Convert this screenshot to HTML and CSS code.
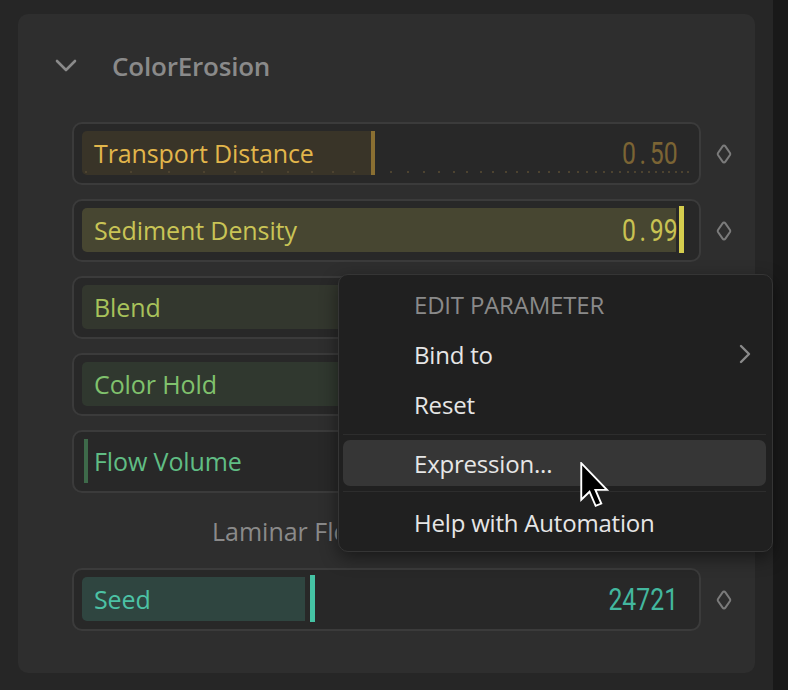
FILE: index.html
```html
<!DOCTYPE html>
<html>
<head>
<meta charset="utf-8">
<link rel="stylesheet" href="styles.css">
</head>
<body>
<div class="app">
  <div class="stage">
    <section class="panel">
      <header class="panel-head">
        <svg class="chev-down" width="22" height="14" viewBox="0 0 22 14"><path d="M2 2 L11 11 L20 2" fill="none" stroke="#8a8a8a" stroke-width="2.6" stroke-linecap="round" stroke-linejoin="round"/></svg>
        <h2 class="panel-title">ColorErosion</h2>
      </header>

      <div class="params">
        <div class="param">
          <div class="field">
            <div class="track">
              <div class="fill fill-transport" style="width:289px"></div>
              <div class="mark mark-transport" style="left:289px"></div>
              <svg class="ticks" width="609" height="44" viewBox="0 0 609 44">
                <g fill="#4d4330">
                  <rect x="3" y="40" width="2" height="2"/><rect x="48" y="40" width="2" height="2"/><rect x="86" y="40" width="2" height="2"/><rect x="121" y="40" width="2" height="2"/><rect x="152" y="40" width="2" height="2"/><rect x="179" y="40" width="2" height="2"/><rect x="205" y="40" width="2" height="2"/><rect x="229" y="40" width="2" height="2"/><rect x="250" y="40" width="2" height="2"/><rect x="271" y="40" width="2" height="2"/><rect x="308" y="40" width="2" height="2"/><rect x="325" y="40" width="2" height="2"/><rect x="341" y="40" width="2" height="2"/><rect x="356" y="40" width="2" height="2"/><rect x="371" y="40" width="2" height="2"/><rect x="384" y="40" width="2" height="2"/><rect x="398" y="40" width="2" height="2"/><rect x="410" y="40" width="2" height="2"/><rect x="423" y="40" width="2" height="2"/><rect x="434" y="40" width="2" height="2"/><rect x="445" y="40" width="2" height="2"/><rect x="456" y="40" width="2" height="2"/><rect x="466" y="40" width="2" height="2"/><rect x="476" y="40" width="2" height="2"/><rect x="486" y="40" width="2" height="2"/><rect x="495" y="40" width="2" height="2"/><rect x="504" y="40" width="2" height="2"/><rect x="513" y="40" width="2" height="2"/><rect x="521" y="40" width="2" height="2"/><rect x="529" y="40" width="2" height="2"/><rect x="537" y="40" width="2" height="2"/><rect x="545" y="40" width="2" height="2"/><rect x="552" y="40" width="2" height="2"/><rect x="559" y="40" width="2" height="2"/><rect x="566" y="40" width="2" height="2"/><rect x="573" y="40" width="2" height="2"/><rect x="580" y="40" width="2" height="2"/><rect x="586" y="40" width="2" height="2"/><rect x="593" y="40" width="2" height="2"/><rect x="599" y="40" width="2" height="2"/><rect x="605" y="40" width="2" height="2"/>
                </g>
              </svg>
              <div class="content">
                <span class="label c-transport">Transport Distance</span>
                <span class="value v-transport">0<span class="dot">.</span>50</span>
              </div>
            </div>
          </div>
          <svg class="key" width="16" height="20" viewBox="0 0 16 20"><path d="M8 1.5 Q8.8 1.5 9.4 2.4 L14 9 Q14.6 10 14 11 L9.4 17.6 Q8.8 18.5 8 18.5 Q7.2 18.5 6.6 17.6 L2 11 Q1.4 10 2 9 L6.6 2.4 Q7.2 1.5 8 1.5 Z" fill="none" stroke="#7b7b7b" stroke-width="2"/></svg>
        </div>

        <div class="param">
          <div class="field">
            <div class="track">
              <div class="fill fill-sediment" style="width:594px"></div>
              <div class="mark mark-sediment" style="left:597px"></div>
              <div class="content">
                <span class="label c-sediment">Sediment Density</span>
                <span class="value v-sediment">0<span class="dot">.</span>99</span>
              </div>
            </div>
          </div>
          <svg class="key" width="16" height="20" viewBox="0 0 16 20"><path d="M8 1.5 Q8.8 1.5 9.4 2.4 L14 9 Q14.6 10 14 11 L9.4 17.6 Q8.8 18.5 8 18.5 Q7.2 18.5 6.6 17.6 L2 11 Q1.4 10 2 9 L6.6 2.4 Q7.2 1.5 8 1.5 Z" fill="none" stroke="#7b7b7b" stroke-width="2"/></svg>
        </div>

        <div class="param">
          <div class="field">
            <div class="track">
              <div class="fill fill-blend" style="width:609px"></div>
              <div class="content">
                <span class="label c-blend">Blend</span>
              </div>
            </div>
          </div>
          <span class="key-space"></span>
        </div>

        <div class="param">
          <div class="field">
            <div class="track">
              <div class="fill fill-hold" style="width:609px"></div>
              <div class="content">
                <span class="label c-hold">Color Hold</span>
              </div>
            </div>
          </div>
          <span class="key-space"></span>
        </div>

        <div class="param">
          <div class="field">
            <div class="track">
              <div class="mark mark-flow" style="left:2px"></div>
              <div class="content">
                <span class="label c-flow">Flow Volume</span>
              </div>
            </div>
          </div>
          <span class="key-space"></span>
        </div>

        <div class="caption"><span class="caption-text">Laminar Flow</span></div>

        <div class="param">
          <div class="field">
            <div class="track">
              <div class="fill fill-seed" style="width:223px"></div>
              <div class="mark mark-seed" style="left:228px"></div>
              <div class="content">
                <span class="label c-seed">Seed</span>
                <span class="value v-seed">24721</span>
              </div>
            </div>
          </div>
          <svg class="key" width="16" height="20" viewBox="0 0 16 20"><path d="M8 1.5 Q8.8 1.5 9.4 2.4 L14 9 Q14.6 10 14 11 L9.4 17.6 Q8.8 18.5 8 18.5 Q7.2 18.5 6.6 17.6 L2 11 Q1.4 10 2 9 L6.6 2.4 Q7.2 1.5 8 1.5 Z" fill="none" stroke="#7b7b7b" stroke-width="2"/></svg>
        </div>
      </div>
    </section>
  </div>
  <div class="sidebar"></div>

  <div class="menu">
    <div class="menu-title">EDIT PARAMETER</div>
    <div class="menu-item">
      <span>Bind to</span>
      <svg class="chev-right" width="14" height="22" viewBox="0 0 14 22"><path d="M3 3 L11 11 L3 19" fill="none" stroke="#8a8a8a" stroke-width="2.4" stroke-linecap="round" stroke-linejoin="round"/></svg>
    </div>
    <div class="menu-item"><span>Reset</span></div>
    <div class="menu-sep"></div>
    <div class="menu-item menu-item-hot"><span>Expression...</span></div>
    <div class="menu-sep"></div>
    <div class="menu-item"><span>Help with Automation</span></div>
  </div>

  <svg class="cursor" width="32" height="46" viewBox="0 0 13.5 19.5"><path d="M0.5 0.5 L0.5 16 L4 12.6 L6.6 18.6 L9 17.6 L6.5 11.8 L11.4 11.8 Z" fill="#000" stroke="#fff" stroke-width="0.8" stroke-linejoin="miter"/></svg>
</div>
</body>
</html>
```

FILE: styles.css
```css
* { box-sizing: border-box; margin: 0; padding: 0; }

html, body {
  width: 788px;
  height: 690px;
  overflow: hidden;
  background: #262626;
  font-family: "Open Sans", "Noto Sans", sans-serif;
}

.app {
  position: relative;
  display: flex;
  width: 788px;
  height: 690px;
}

.stage {
  width: 773px;
  height: 690px;
  padding: 14px 0 0 18px;
  background: #262626;
}

.sidebar {
  width: 15px;
  height: 690px;
  background: #191919;
}

.panel {
  width: 737px;
  height: 659px;
  background: #2e2e2e;
  border-radius: 10px;
  padding-top: 26px;
}

.panel-head {
  display: flex;
  align-items: center;
  height: 52px;
  padding-left: 37px;
}

.chev-down { display: block; }

.panel-title {
  margin-left: 35px;
  font-size: 26px;
  font-weight: 600;
  color: #8a8a8a;
  letter-spacing: -0.2px;
}

.params {
  margin-top: 30px;
  padding-left: 54px;
  display: flex;
  flex-direction: column;
  gap: 14px;
}

.param {
  display: flex;
  align-items: center;
}

.field {
  width: 629px;
  height: 63px;
  border: 2px solid #3b3b3b;
  border-radius: 10px;
  background: #282828;
  padding: 7px 8px 8px 8px;
}

.track {
  position: relative;
  height: 44px;
  width: 609px;
}

.fill {
  position: absolute;
  left: 0; top: 0; bottom: 0;
  border-radius: 5px;
}

.fill-transport { background: #393428; border-radius: 5px 0 0 5px; }
.fill-sediment { background: #474631; border-radius: 5px 0 0 5px; }
.fill-blend { background: #33372e; }
.fill-hold { background: #30382f; }
.fill-seed { background: #2f4540; border-radius: 5px 0 0 5px; }

.mark {
  position: absolute;
  top: 0; bottom: 0;
}
.mark-transport { width: 4px; background: #8a6f32; }
.mark-sediment { width: 5px; background: #d5cd4e; top: -2px; bottom: -1px; }
.mark-flow { width: 4px; background: #3e6a4a; }
.mark-seed { width: 5px; background: #45c3a4; top: -2px; bottom: -1px; }

.ticks {
  position: absolute;
  left: 0; top: 0;
}

.content {
  position: relative;
  display: flex;
  align-items: center;
  justify-content: space-between;
  height: 44px;
  padding: 0 13px 0 12px;
}

.label {
  font-size: 25px;
  line-height: 1;
  letter-spacing: -0.1px;
}

.c-transport { color: #e2b64b; }
.c-sediment { color: #c9c456; }
.c-blend { color: #a8c25b; }
.c-hold { color: #80c26d; }
.c-flow { color: #60bd84; }
.c-seed { color: #4cc2a5; }

.value {
  display: inline-block;
  font-family: "Roboto", sans-serif;
  font-size: 31px;
  line-height: 1;
  transform: scaleX(0.8);
  transform-origin: right center;
  white-space: nowrap;
}
.dot {
  display: inline-block;
  width: 0.5615em;
  text-align: center;
}
.v-transport { color: #7b6434; }
.v-sediment { color: #c9c252; }
.v-seed { color: #43b79e; }

.key {
  display: block;
  margin-left: 15px;
}
.key-space { width: 31px; }

.caption {
  height: 47px;
  display: flex;
  align-items: center;
  padding-left: 140px;
  font-size: 25px;
  color: #8a8a8a;
  white-space: nowrap;
}

.caption-text {
  display: block;
  width: 125px;
  overflow: hidden;
  white-space: nowrap;
}

/* context menu */
.menu {
  position: absolute;
  left: 338px;
  top: 274px;
  width: 435px;
  height: 278px;
  background: #202020;
  border: 1px solid #353535;
  border-radius: 10px;
  box-shadow: 0 6px 18px rgba(0,0,0,0.45);
  padding: 4px 6px 4px 4px;
  display: flex;
  flex-direction: column;
}

.menu-title {
  height: 50px;
  display: flex;
  align-items: center;
  padding-left: 71px;
  font-size: 24px;
  color: #8a8a8a;
  letter-spacing: -0.2px;
}

.menu-item {
  height: 50px;
  display: flex;
  align-items: center;
  justify-content: space-between;
  padding: 0 14px 0 71px;
  font-size: 24px;
  color: #e6e6e6;
  border-radius: 7px;
  letter-spacing: -0.2px;
}

.menu-item-hot {
  height: 46px;
  background: #363636;
}

.menu-sep {
  height: 11px;
  display: flex;
  align-items: center;
}
.menu-sep::before {
  content: "";
  display: block;
  width: 100%;
  height: 1px;
  background: #2d2d2d;
}

.chev-right { display: block; }

.cursor {
  position: absolute;
  left: 580px;
  top: 462px;
}
```
